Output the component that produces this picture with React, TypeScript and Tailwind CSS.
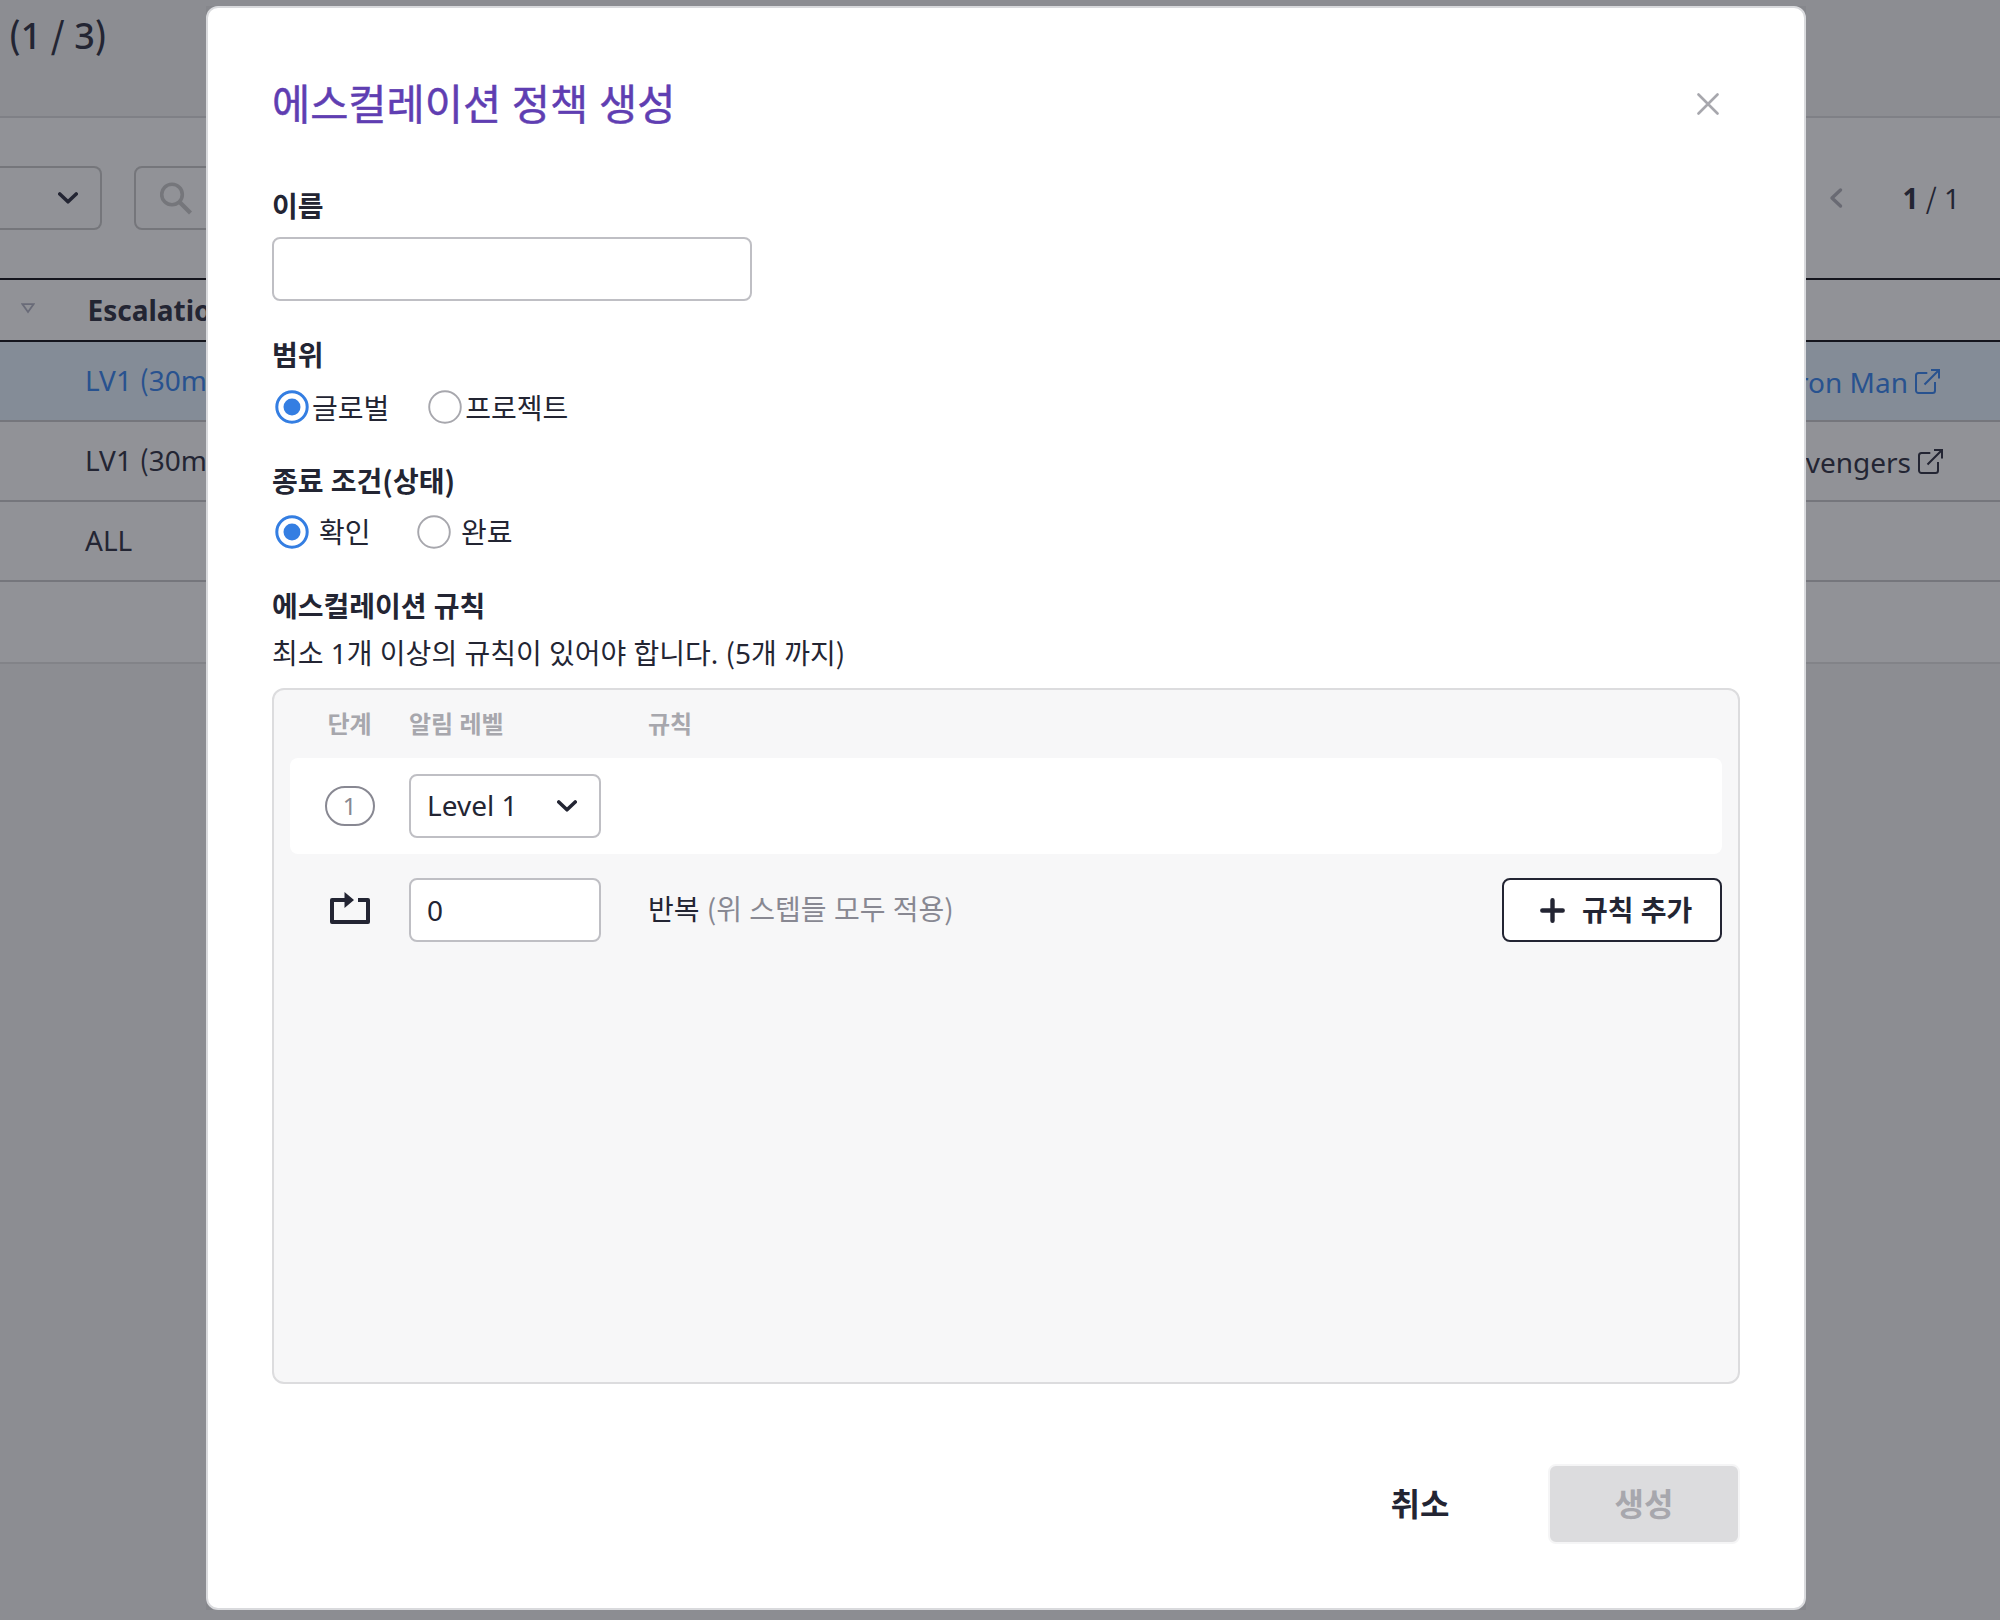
import React from "react";

function Chevron({ className }: { className?: string }) {
  return (
    <svg className={className} width="20" height="12" viewBox="0 0 20 12" fill="none">
      <path d="M1.8 2l8.2 7.8L18.2 2" stroke="currentColor" strokeWidth="3.6" strokeLinecap="round" strokeLinejoin="round" />
    </svg>
  );
}

function ExternalLink() {
  return (
    <svg width="25" height="25" viewBox="0 0 25 25" fill="none" stroke="currentColor" strokeWidth="2">
      <path d="M12.300 4H3.500a2.500 2.500 0 0 0-2.500 2.500v15a2.500 2.500 0 0 0 2.500 2.500h14a2.500 2.500 0 0 0 2.500-2.500V13" />
      <path d="M9.500 15.500L23.500 1.500M16 1h8v8.500" />
    </svg>
  );
}

function Radio({ checked }: { checked?: boolean }) {
  return checked ? (
    <svg width="34" height="34" viewBox="0 0 34 34" fill="none">
      <circle cx="17" cy="17" r="15.200" stroke="#347ee2" strokeWidth="3" />
      <circle cx="17" cy="17" r="8.500" fill="#347ee2" />
    </svg>
  ) : (
    <svg width="34" height="34" viewBox="0 0 34 34" fill="none">
      <circle cx="17" cy="17" r="15.800" stroke="#a7a7ad" strokeWidth="1.900" />
    </svg>
  );
}

/* Punctuation set in the Korean face, whose brackets and slash are taller. */
function P({ children }: { children: string }) {
  return <span className="font-['Noto_Sans_CJK_KR',sans-serif] leading-[0]">{children}</span>;
}

function PageBehind() {
  return (
    <div className="flex h-[1620px] w-[2000px] flex-col bg-[#8c8d92] text-[#232533]">
      <header className="h-[118px] border-b-2 border-[#7f8086] pl-2">
        <h1 className="h-[72px] text-[36px] font-medium leading-[72px]">
          <P>(</P>1 <P>/</P> 3<P>)</P>
        </h1>
      </header>
      <div className="flex h-[160px] items-center bg-[#919297]">
        <div className="flex h-16 w-[102px] items-center justify-end rounded-r-lg border-2 border-l-0 border-[#75767b] pr-[22px]">
          <Chevron />
        </div>
        <div className="ml-8 flex h-16 w-[400px] items-center rounded-lg border-2 border-[#75767b] pl-6 text-[#75767b]">
          <svg width="32" height="33" viewBox="0 0 32 33" fill="none" stroke="currentColor">
            <circle cx="12" cy="12.500" r="10.300" strokeWidth="3.600" />
            <path d="M20 20.500L30.500 31" strokeWidth="4.200" />
          </svg>
        </div>
        <div className="ml-auto mr-10 flex items-center">
          <svg className="text-[#696a73]" width="14" height="22" viewBox="0 0 14 22" fill="none">
            <path d="M11.500 3L3 11l8.500 8" stroke="currentColor" strokeWidth="3.400" strokeLinecap="round" strokeLinejoin="round" />
          </svg>
          <div className="ml-[59px] whitespace-pre text-[28px] leading-10">
            <b>1</b> <P>/</P> 1
          </div>
        </div>
      </div>
      <div className="bg-[#919297] text-[28px]">
        <div className="flex h-16 items-center border-y-2 border-[#14151d] pl-[21px] font-bold">
          <svg className="-mt-1" width="14" height="11" viewBox="0 0 14 11" fill="none" stroke="#696b78" strokeWidth="1.800">
            <path d="M1.500 1.200h11L7 9z" />
          </svg>
          <span className="ml-[52.500px]">Escalation</span>
        </div>
        <div className="flex h-20 items-center justify-between border-b-2 border-[#75767c] bg-[#848c97] pl-[85px] pr-[60px] text-[#28528f]">
          <span className="-mt-0.5">
            LV1 <P>(</P>30m<P>)</P>
          </span>
          <span className="flex items-center gap-[7px]">
            <span className="pt-0.5">Iron Man</span>
            <ExternalLink />
          </span>
        </div>
        <div className="flex h-20 items-center justify-between border-b-2 border-[#75767c] pl-[85px] pr-[57px]">
          <span className="-mt-0.5">
            LV1 <P>(</P>30m<P>)</P>
          </span>
          <span className="flex items-center gap-[7px]">
            <span className="pt-0.5">Avengers</span>
            <ExternalLink />
          </span>
        </div>
        <div className="flex h-20 items-center border-b-2 border-[#75767c] pl-[85px]">
          <span className="-mt-0.5">ALL</span>
        </div>
        <div className="h-[82px] border-b-2 border-[#828388]" />
      </div>
    </div>
  );
}

function Label({ children, className }: { children: React.ReactNode; className: string }) {
  return <div className={`h-10 text-[28px] font-bold leading-10 ${className}`}>{children}</div>;
}

function RulesPanel() {
  return (
    <div className="mt-[15px] h-[696px] rounded-xl border-2 border-[#dcdcde] bg-[#f7f7f8] px-4">
      <div className="flex h-[68px] items-center text-[24px] font-bold text-[#a7a7ad]">
        <div className="w-[119px] text-center">단계</div>
        <div className="w-[192px]">알림 레벨</div>
        <div className="ml-[47px]">규칙</div>
      </div>
      <div className="flex h-24 items-center rounded-lg bg-white">
        <div className="flex w-[119px] justify-center">
          <div className="flex h-10 w-[50px] items-center justify-center rounded-[20px] border-2 border-[#888892] text-[24px] leading-none text-[#888892]">
            1
          </div>
        </div>
        <div className="flex h-16 w-[192px] items-center justify-between rounded-lg border-2 border-[#bfbfc4] bg-white pl-4 pr-[22px] text-[28px]">
          <span className="-mt-0.5">Level 1</span>
          <Chevron />
        </div>
      </div>
      <div className="mt-6 flex h-16 items-center text-[28px]">
        <div className="flex w-[119px] justify-center pb-1">
          <svg width="40" height="32" viewBox="0 0 40 32" fill="#232533">
            <path d="M14.500 0L24 8l-9.500 8v-6H4v18h32V10h-8V6h10a2 2 0 0 1 2 2v22a2 2 0 0 1-2 2H2a2 2 0 0 1-2-2V8a2 2 0 0 1 2-2h12.500z" />
          </svg>
        </div>
        <div className="flex h-16 w-[192px] items-center rounded-lg border-2 border-[#bfbfc4] bg-white pl-4">0</div>
        <div className="-mt-0.5 ml-[47px] whitespace-pre">
          반복{" "}
          <span className="text-[#888892]">
            <P>(</P>위 스텝들 모두 적용<P>)</P>
          </span>
        </div>
        <button className="ml-auto flex h-16 w-[220px] items-center rounded-lg border-2 border-[#232533] bg-white pl-[35.500px] font-bold">
          <svg width="25" height="25" viewBox="0 0 25 25" fill="none">
            <path d="M12.500 2.300v20.400M2.300 12.500h20.400" stroke="#232533" strokeWidth="4.400" strokeLinecap="round" />
          </svg>
          <span className="ml-[17.500px]">규칙 추가</span>
        </button>
      </div>
    </div>
  );
}

function Modal() {
  return (
    <div className="absolute left-[206px] top-1.5 h-[1604px] w-[1600px] bg-[#86878c]">
      <div className="flex h-full flex-col rounded-xl border-2 border-[#d9dadd] bg-white px-16 pt-16 text-[#232533]">
        <div className="flex h-16 items-center justify-between pr-[21px]">
          <h2 className="text-[41.500px] leading-[62px] text-[#5f3eb2] [-webkit-text-stroke:0.5px_#5f3eb2]">에스컬레이션 정책 생성</h2>
          <svg width="22" height="22" viewBox="0 0 22 22" fill="none">
            <path d="M1.500 1.500l19 19M20.500 1.500l-19 19" stroke="#a7a7ad" strokeWidth="2.600" strokeLinecap="round" />
          </svg>
        </div>
        <Label className="mt-[50px]">이름</Label>
        <div className="mt-[11px] h-16 w-[480px] rounded-lg border-2 border-[#bfbfc4] bg-white" />
        <Label className="mt-[34px]">범위</Label>
        <div className="mt-3 flex h-10 items-center pl-[3px] text-[28px]">
          <Radio checked />
          <span className="ml-[3px] pt-0.5">글로벌</span>
          <span className="ml-[39px] flex items-center">
            <Radio />
            <span className="ml-[3px] pt-0.5">프로젝트</span>
          </span>
        </div>
        <Label className="mt-[34px]">
          종료 조건<P>(</P>상태<P>)</P>
        </Label>
        <div className="mt-[11px] flex h-10 items-center pl-[3px] text-[28px]">
          <Radio checked />
          <span className="ml-[10px]">확인</span>
          <span className="ml-[46px] flex items-center">
            <Radio />
            <span className="ml-[10.500px]">완료</span>
          </span>
        </div>
        <Label className="mt-[34px]">에스컬레이션 규칙</Label>
        <p className="mt-[7px] h-10 text-[28px] leading-10">
          최소 1개 이상의 규칙이 있어야 합니다. <P>(</P>5개 까지<P>)</P>
        </p>
        <RulesPanel />
        <div className="mt-20 flex h-20 justify-end text-[32px] font-bold">
          <button className="w-[140px]">취소</button>
          <button className="ml-[58px] w-[192px] rounded-lg border-2 border-[#f5f5f6] bg-[#dcdcde] text-[#a7a7ad]">생성</button>
        </div>
      </div>
    </div>
  );
}

export default function App() {
  return (
    <div className="relative h-[1620px] w-[2000px] overflow-hidden font-['Noto_Sans','Noto_Sans_CJK_KR',sans-serif]">
      <PageBehind />
      <Modal />
    </div>
  );
}
